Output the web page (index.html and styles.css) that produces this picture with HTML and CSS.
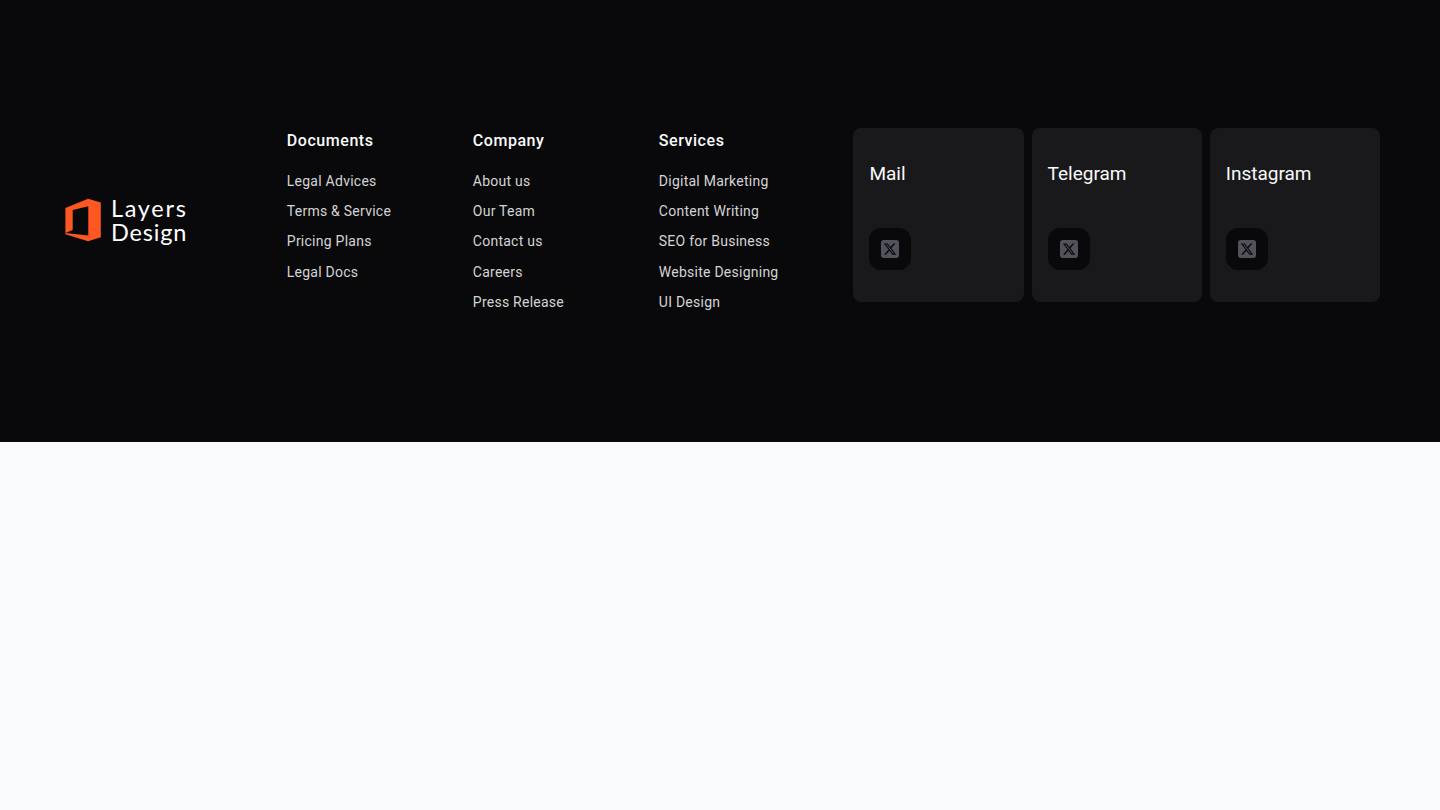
FILE: index.html
```
<!DOCTYPE html>
<html lang="en">
<head>
<meta charset="UTF-8" />
<meta name="viewport" content="width=device-width, initial-scale=1" />
<title>Layers Design</title>
<link rel="stylesheet" href="styles.css">
</head>
<body>
<svg width="0" height="0" class="sprite" aria-hidden="true">
  <symbol id="icon-x" viewBox="0 32 448 448">
    <path d="M64 32C28.7 32 0 60.7 0 96V416c0 35.3 28.7 64 64 64H384c35.3 0 64-28.7 64-64V96c0-35.3-28.7-64-64-64H64zm297.1 84L257.3 234.6 379.4 396H283.8L209 298.1 123.3 396H75.8l111-126.9L69.7 116h98l67.7 89.5L313.6 116h47.5zM323.3 367.6L153.4 142.9H125.1L296.9 367.6h26.3z" />
  </symbol>
</svg>
<footer class="footer">
  <div class="footer__inner">
    <a href="#" class="logo" aria-label="Layers Design">
      <svg class="logo__mark" viewBox="0 0 36 44" aria-hidden="true">
        <path fill="#ff5722" d="M.4 9.9 23.1.7 35.8 4.5V39.3L23.1 43.2.4 36.2V34.9L23.3 37.6V8.2L7.7 12V32L.4 35.1z" />
      </svg>
      <span class="logo__text">
        <span class="logo__line logo__line--top">Layers</span>
        <span class="logo__line">Design</span>
      </span>
    </a>
    <nav class="links">
      <div class="links__col">
        <h2 class="links__title">Documents</h2>
        <ul class="links__list">
          <li><a href="#">Legal Advices</a></li>
          <li><a href="#">Terms &amp; Service</a></li>
          <li><a href="#">Pricing Plans</a></li>
          <li><a href="#">Legal Docs</a></li>
        </ul>
      </div>
      <div class="links__col">
        <h2 class="links__title">Company</h2>
        <ul class="links__list">
          <li><a href="#">About us</a></li>
          <li><a href="#">Our Team</a></li>
          <li><a href="#">Contact us</a></li>
          <li><a href="#">Careers</a></li>
          <li><a href="#">Press Release</a></li>
        </ul>
      </div>
      <div class="links__col">
        <h2 class="links__title">Services</h2>
        <ul class="links__list">
          <li><a href="#">Digital Marketing</a></li>
          <li><a href="#">Content Writing</a></li>
          <li><a href="#">SEO for Business</a></li>
          <li><a href="#">Website Designing</a></li>
          <li><a href="#">UI Design</a></li>
        </ul>
      </div>
    </nav>
    <div class="cards">
      <a href="#" class="card">
        <span class="card__title">Mail</span>
        <span class="card__icon"><svg><use href="#icon-x" /></svg></span>
      </a>
      <a href="#" class="card">
        <span class="card__title">Telegram</span>
        <span class="card__icon"><svg><use href="#icon-x" /></svg></span>
      </a>
      <a href="#" class="card">
        <span class="card__title">Instagram</span>
        <span class="card__icon"><svg><use href="#icon-x" /></svg></span>
      </a>
    </div>
  </div>
</footer>
</body>
</html>
```
FILE: styles.css
```
* {
  box-sizing: border-box;
}
body {
  margin: 0;
  background: #f9fafb;
  font-family: Roboto, "Liberation Sans", sans-serif;
}
a {
  color: inherit;
  text-decoration: none;
}
.sprite {
  display: none;
}
.footer {
  height: 442px;
  padding: 128px 60px;
  background: #09090b;
  color: #fafafa;
}
.footer__inner {
  display: grid;
  grid-template-columns: 226.8px 566.6px 526.6px;
  height: 186px;
}

/* Logo */
.logo {
  display: flex;
  align-items: center;
  gap: 10px;
  padding: 0 0 7px 5px;
}
.logo__mark {
  width: 36px;
  height: 44px;
}
.logo__text {
  font-family: Lato, sans-serif;
  font-size: 23.5px;
  line-height: 24px;
  color: #fff;
}
.logo__line {
  display: block;
  letter-spacing: 0.8px;
}
.logo__line--top {
  letter-spacing: 1.7px;
}

/* Link columns */
.links {
  display: grid;
  grid-template-columns: repeat(3, 186px);
}
.links__title {
  margin: 0 0 15px;
  padding-top: 1px;
  font-size: 16px;
  line-height: 24px;
  font-weight: 500;
  letter-spacing: 0.55px;
}
.links__list {
  list-style: none;
  margin: 0;
  padding: 0;
  font-size: 14px;
  color: #d4d4d4;
  letter-spacing: 0.25px;
}
.links__list li {
  height: 30.2px;
  line-height: 26px;
}

/* Contact cards */
.cards {
  display: grid;
  grid-template-columns: repeat(3, 1fr);
  gap: 8px;
  height: 174px;
}
.card {
  display: flex;
  flex-direction: column;
  justify-content: space-between;
  padding: 32px 16px;
  border-radius: 8px;
  background: #19191b;
}
.card__title {
  font-size: 19px;
  line-height: 28px;
}
.card__icon {
  display: flex;
  align-items: center;
  justify-content: center;
  width: 42px;
  height: 42px;
  border-radius: 12px;
  background: #09090b;
}
.card__icon svg {
  width: 18px;
  height: 18px;
  fill: #52525b;
}
```
